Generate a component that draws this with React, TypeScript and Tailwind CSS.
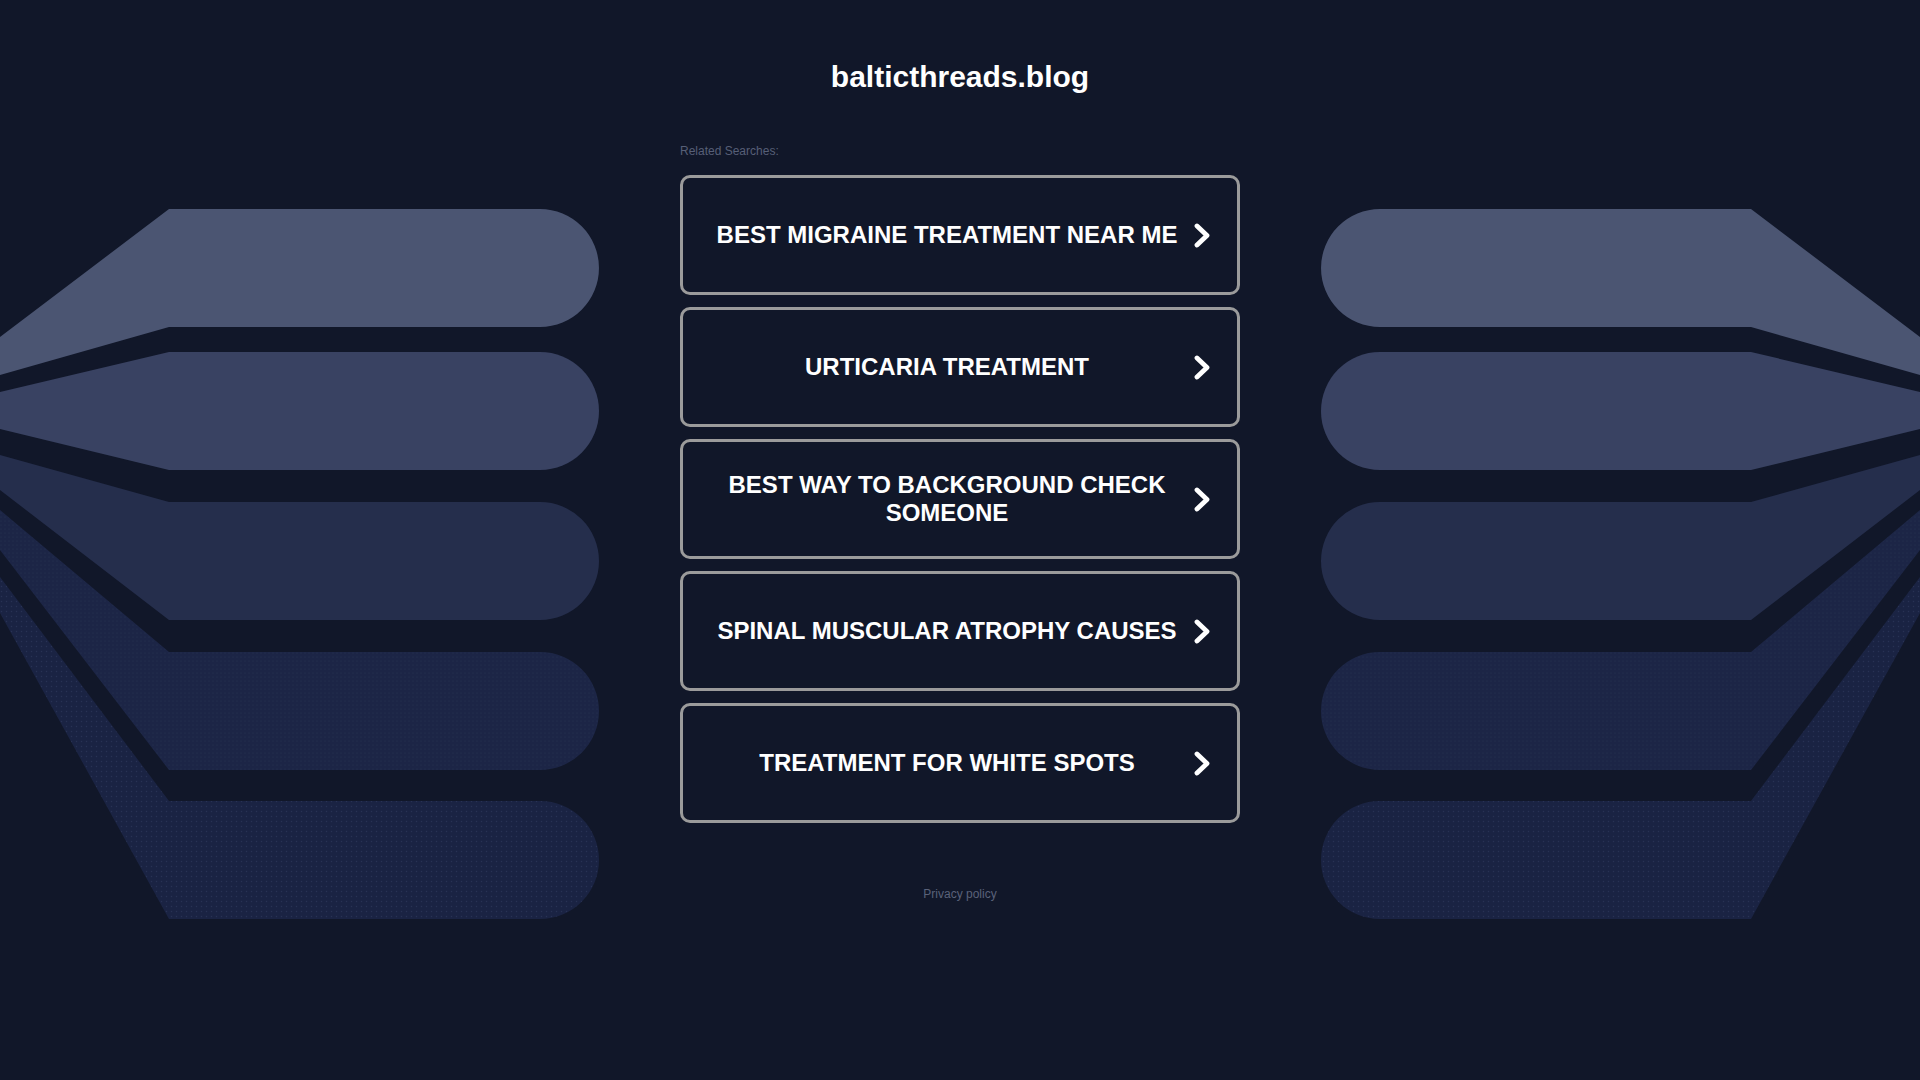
import React from "react";

const searches: string[] = [
  "BEST MIGRAINE TREATMENT NEAR ME",
  "URTICARIA TREATMENT",
  "BEST WAY TO BACKGROUND CHECK SOMEONE",
  "SPINAL MUSCULAR ATROPHY CAUSES",
  "TREATMENT FOR WHITE SPOTS",
];

// left-hand fan of rounded bars; the right one is the same drawing mirrored
const Fan: React.FC<{ mirrored?: boolean; id: string }> = ({ mirrored, id }) => (
  <svg
    width="600"
    height="1080"
    viewBox="0 0 600 1080"
    className={mirrored ? "shrink-0 -scale-x-100" : "shrink-0"}
  >
    <defs>
      <pattern id={`${id}-dots`} width="4" height="4" patternUnits="userSpaceOnUse">
        <rect width="4" height="4" fill="#1c2546" />
        <circle cx="1" cy="1" r="0.6" fill="#273152" />
      </pattern>
      <pattern id={`${id}-dots2`} width="5" height="5" patternUnits="userSpaceOnUse">
        <rect width="5" height="5" fill="#1a2343" />
        <circle cx="1.5" cy="1.5" r="0.7" fill="#283255" />
      </pattern>
    </defs>
    <path d="M0 337 L169 209 L540 209 A59 59 0 0 1 540 327 L169 327 L0 375 Z" fill="#4b5572" />
    <path d="M0 392 L169 352 L540 352 A59 59 0 0 1 540 470 L169 470 L0 429 Z" fill="#394262" />
    <path d="M0 455 L169 502 L540 502 A59 59 0 0 1 540 620 L169 620 L0 490 Z" fill="#252e4c" />
    <path d="M0 510 L169 652 L540 652 A59 59 0 0 1 540 770 L169 770 L0 550 Z" fill={`url(#${id}-dots)`} />
    <path d="M0 577 L169 801 L540 801 A59 59 0 0 1 540 919 L169 919 L0 613 Z" fill={`url(#${id}-dots2)`} />
  </svg>
);

const Chevron = () => (
  <svg width="16" height="25" viewBox="0 0 16 25" className="ml-[13px] shrink-0">
    <polyline
      points="3,3 13,12.5 3,22"
      fill="none"
      stroke="#fff"
      strokeWidth="4.8"
      strokeLinecap="round"
      strokeLinejoin="round"
    />
  </svg>
);

export default function App() {
  return (
    <div className="min-h-screen w-full bg-[#111729] font-['Liberation_Sans',Arial,sans-serif] overflow-hidden">
      <div className="flex justify-between">
        <Fan id="left" />

        <div className="w-[560px] shrink-0 pt-[60px]">
          <h1 className="text-center text-[30px] leading-[34px] font-bold text-white">
            balticthreads.blog
          </h1>

          <p className="mt-[50px] text-[12px] leading-[14px] text-[#575f77]">Related Searches:</p>

          <div className="mt-[17px] flex flex-col gap-[12px]">
            {searches.map((s) => (
              <a
                key={s}
                href="#"
                className="flex h-[120px] items-center rounded-[10px] border-[3px] border-[#9b9b9b] pl-[30px] pr-[27px]"
              >
                <span className="flex-1 text-center text-[24px] leading-[28px] font-bold text-white">
                  {s}
                </span>
                <Chevron />
              </a>
            ))}
          </div>

          <p className="mt-[64px] text-center text-[12px] leading-[14px] text-[#5a6279]">Privacy policy</p>
        </div>

        <Fan id="right" mirrored />
      </div>
    </div>
  );
}
